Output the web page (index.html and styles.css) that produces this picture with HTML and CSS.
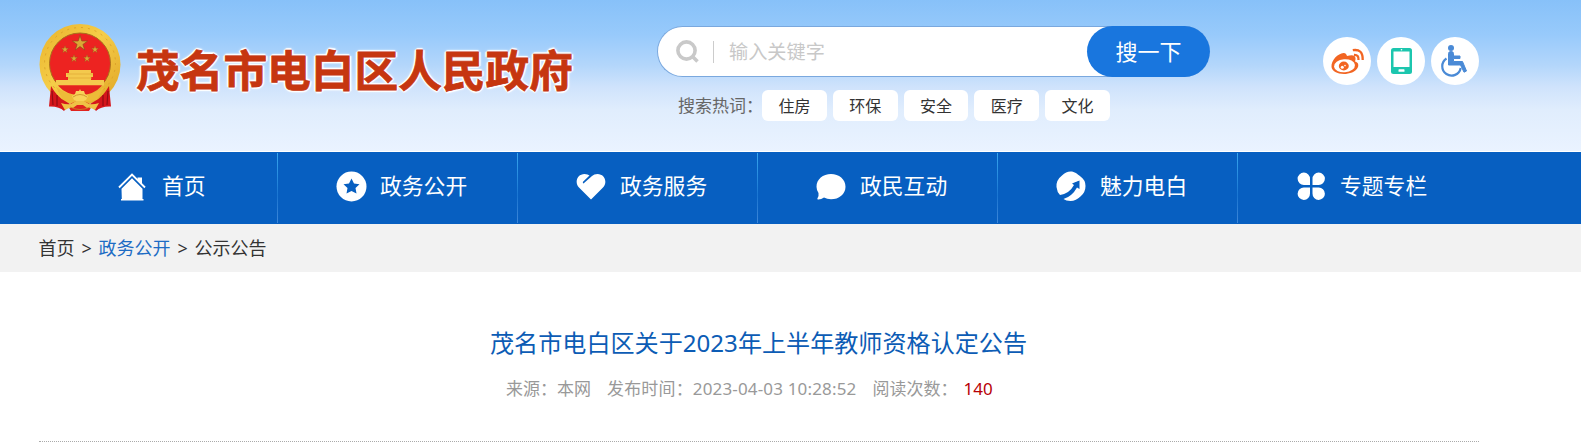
FILE: index.html
```
<!DOCTYPE html>
<html lang="zh-CN">
<head>
<meta charset="utf-8">
<title>茂名市电白区人民政府</title>
<link rel="stylesheet" href="styles.css">
</head>
<body>
<header class="header">
  <div class="brand">
    <svg class="emblem" viewBox="0 0 82 88">
      <defs>
        <linearGradient id="gold" x1="0" y1="0" x2="1" y2="1"><stop offset="0" stop-color="#e9b32c"/><stop offset=".45" stop-color="#f5cd48"/><stop offset="1" stop-color="#e0a424"/></linearGradient>
        <polygon id="star" points="0,-1 .225,-.309 .951,-.309 .363,.118 .588,.809 0,.382 -.588,.809 -.363,.118 -.951,-.309 -.225,-.309"/>
      </defs>
      <circle cx="41" cy="40.500" r="40.500" fill="url(#gold)"/>
      <circle cx="41" cy="39" r="35.500" fill="none" stroke="#dda32a" stroke-width="1" stroke-dasharray="2 5"/>
      <circle cx="41" cy="39.500" r="30.500" fill="#ed2321" stroke="#a8701c" stroke-width="1"/>
      <g fill="#dba836" stroke="#8b481b" stroke-width=".08">
        <use href="#star" transform="translate(41 19.500) scale(8)"/>
        <use href="#star" transform="translate(26 25.500) scale(3.900)"/>
        <use href="#star" transform="translate(56 25.500) scale(3.900)"/>
        <use href="#star" transform="translate(35 34.500) scale(3.900)"/>
        <use href="#star" transform="translate(48 34.500) scale(3.900)"/>
      </g>
      <path d="M30 46h22v3h2v4h-2v3h13v5.500H17V56h12v-3h-2v-4h3z" fill="#f4c94d"/>
      <path d="M28 50h26M29 54h24" stroke="#dfa633" stroke-width=".7"/>
      <path d="M19 61.500h44Q55 71 41 71T19 61.500Z" fill="#e5211f"/>
      <path d="M17 63Q27 70 35 71L39 78 24 76ZM65 63Q55 70 47 71L43 78 58 76Z" fill="#edbb38"/>
      <path d="M12 62Q18 73 26 77L31 80 25 87Q20 82 10 82.500ZM70 62Q64 73 56 77L51 80 57 87Q62 82 72 82.500Z" fill="#d5161b"/>
      <path d="M13 67l1 14M18 71l0 11M69 67l-1 14M64 71l0 11" stroke="#930d13" stroke-width="1.200"/>
      <path d="M29 82q5-5 12-5t12 5l-3 5H32z" fill="#e0231f"/>
      <path d="M33 72l3-2 1-3 3 0 1-2 1 2 3 0 1 3 3 2-2 4q-6 3-12 0z" fill="#f8d359"/>
      <path d="M22 79q6 2 10 1l5-3h8l5 3q4 1 10-1l-4 7q-5-3-8-2l-4-3h-6l-4 3q-3-1-8 2z" fill="#efc345"/>
      <path d="M34 73q7-5 14 0M31 83q10 5 20 0" stroke="#c78a25" fill="none" stroke-width=".8"/>
    </svg>
    <h1 class="site-name">茂名市电白区人民政府</h1>
  </div>
  <div class="search">
    <div class="search-bar">
      <svg class="search-icon" viewBox="0 0 23 23"><circle cx="10.500" cy="10.500" r="8.600" fill="none" stroke="#c9c9c9" stroke-width="3.600"/><path d="M16 16l5.500 5.500" stroke="#c9c9c9" stroke-width="3.600"/></svg>
      <span class="search-sep"></span>
      <span class="placeholder">输入关键字</span>
      <button class="search-btn">搜一下</button>
    </div>
    <div class="hot">
      <span class="hot-label">搜索热词：</span>
      <a class="chip">住房</a><a class="chip">环保</a><a class="chip">安全</a><a class="chip">医疗</a><a class="chip">文化</a>
    </div>
  </div>
  <div class="tools">
    <a class="tool"><svg viewBox="0 0 48 48">
      <path d="M8.500 30C8 23 15 16.500 20.500 16C23 16 23.500 17.500 24 19C28 18 32 17.500 32.500 21C32.700 23 32 24 32 24.500C34.500 25 36 27 35 30C33 35 26 37 21 37C14 37 9 34 8.500 30Z" fill="#f26522"/>
      <ellipse cx="21.500" cy="28.800" rx="10.500" ry="6.500" fill="#fff" transform="rotate(-5 21.500 28.800)"/>
      <ellipse cx="20.800" cy="29" rx="5" ry="4.400" fill="#f26522"/><circle cx="19.300" cy="30.200" r="1.500" fill="#fff"/><circle cx="22" cy="28.600" r=".8" fill="#fff"/>
      <path d="M31 17.800Q36 17.500 35.500 23M29.800 13.200Q40 11.500 39.700 23" fill="none" stroke="#f26522" stroke-width="2.300"/></svg></a>
    <a class="tool"><svg viewBox="0 0 48 48"><rect x="14" y="11" width="21" height="26" rx="2.500" fill="#1cc6ae"/><path d="M16.500 14.500h16V30h-16z" fill="#fff"/><rect x="21.500" y="32.300" width="6" height="2.500" rx=".6" fill="#fff"/><circle cx="24.500" cy="12.800" r=".8" fill="#fff"/></svg></a>
    <a class="tool"><svg viewBox="0 0 48 48"><circle cx="20" cy="11" r="3" fill="#4a8ad6"/><path d="M17.500 16.500q0-2 2.500-2t2.500 2v2.500h6.500v2.500h-6.500v3h9L35.500 34l-2.500 1.200L29.500 28H17.500z" fill="#4a8ad6" stroke="#4a8ad6" stroke-linejoin="round"/><path d="M15.500 21.500A9.300 9.300 0 1 0 29.700 31" fill="none" stroke="#4a8ad6" stroke-width="2.200"/></svg></a>
  </div>
</header>
<nav class="nav">
  <a class="nav-item home"><svg viewBox="0 0 32 32"><path d="M3 17.500L16 4.500L29 17.500" fill="none" stroke="#fff" stroke-width="1.900"/><path d="M21.500 7.500h4.500v7l-4.500-4.500z M5.500 18.700L16 8.200l10.500 10.500V29h1v1.500H5V29h.8z" fill="#fff"/></svg><span>首页</span></a>
  <a class="nav-item"><svg viewBox="0 0 32 32"><circle cx="16.500" cy="16.500" r="15" fill="#fff"/><path d="M16.500 8.500l2.500 5 5.500.7-4 3.900 1 5.500-5-2.700-5 2.700 1-5.500-4-3.900 5.500-.7z" fill="#075fc1"/></svg><span>政务公开</span></a>
  <a class="nav-item"><svg viewBox="0 0 32 32"><path d="M16 29.500L4 17.500C-1 12 2.500 4 9.500 4Q13 4 14.500 5.500L8 11.800Q7.500 13 8.500 13.500L17 6Q19 4 22.500 4C29.500 4 33 12 28 17.500Z" fill="#fff"/></svg><span>政务服务</span></a>
  <a class="nav-item"><svg viewBox="0 0 32 32"><path d="M16 4C24 4 30.500 9.300 30.500 16.700S24 29.300 16 29.300Q12 29.300 9 27.500Q6 29.700 2.800 29.500Q2 29 2.500 28.300Q4 26.500 3.500 23Q1.500 20 1.500 16.700C1.500 9.300 8 4 16 4Z" fill="#fff"/></svg><span>政民互动</span></a>
  <a class="nav-item"><svg viewBox="0 0 32 32"><path d="M15.500 1.500C20 1.500 22 4 25.500 6.500Q30.500 10 30.500 16Q30.500 22 26 26Q21 31 15.500 31Q11 31 8.500 29Q17 26.500 22 17.500L24.500 19V10.500L17 13.500L19 15Q14.500 23.500 5 25Q2 22 1.500 17Q1 10 7 5.500Q11 1.500 15.500 1.500Z" fill="#fff"/><path d="M7.500 27.300Q16 25 21.300 15.500L24 17.500V11.300L18 13.500L20 15Q15.500 24 6 25.700Z" fill="#075fc1"/></svg><span>魅力电白</span></a>
  <a class="nav-item"><svg viewBox="0 0 32 32"><path d="M15 15H9A6.200 6.200 0 1 1 15 9ZM17.500 15V9A6.200 6.200 0 1 1 23.500 15ZM15 17.500V23.500A6.200 6.200 0 1 1 9 17.500ZM17.500 17.500H23.500A6.200 6.200 0 1 1 17.500 23.500Z" fill="#fff"/></svg><span>专题专栏</span></a>
</nav>
<div class="crumbs"><a>首页</a><i>&gt;</i><a class="current">政务公开</a><i>&gt;</i><a>公示公告</a></div>
<main class="article">
  <h2 class="title">茂名市电白区关于2023年上半年教师资格认定公告</h2>
  <div class="meta"><span>来源：本网</span><span class="date">发布时间：2023-04-03 10:28:52</span><span>阅读次数：</span><b>140</b></div>
</main>
</body>
</html>
```
FILE: styles.css
```
* { box-sizing: border-box; }
body {
  margin: 0;
  background: #fff;
  color: #333;
  font-family: "Noto Sans", "Noto Sans CJK SC", sans-serif;
  overflow: hidden;
}
svg { display: block; flex: none; }
.header {
  display: flex;
  align-items: flex-start;
  height: 152px;
  padding-left: 39px;
  border-bottom: 1px solid #fff;
  background: linear-gradient(#87c1f9 0, #98cafb 35px, #b3d6fb 65px, #cfe3fc 87px, #e0edfd 110px, #eaf3ff 151px);
}
.brand { display: flex; width: 618px; padding-top: 24px; }
.emblem { width: 82px; height: 88px; }
.site-name {
  margin: 12px 0 0 15px;
  font: 700 43.7px/64px "Noto Sans CJK SC", sans-serif;
  white-space: nowrap;
  color: #c63610;
  -webkit-text-stroke: .8px #c63610;
  text-shadow: 2px 0 1px #fff, -2px 0 1px #fff, 0 2px 1px #fff, 0 -2px 1px #fff, 1px 1px 1px #fff, -1px -1px 1px #fff, 0 0 4px #fff;
}
.search { width: 666px; padding-top: 26px; }
.search-bar {
  display: flex;
  align-items: center;
  width: 553px;
  height: 51px;
  padding-left: 18px;
  border: 1px solid #7aa8de;
  border-right: 0;
  border-radius: 26px;
  background: #fff;
}
.search-icon { width: 23px; height: 23px; }
.search-sep { width: 1px; height: 22px; margin-left: 14px; background: #ccc; }
.placeholder { margin-left: 15px; font-size: 19.2px; line-height: 28px; color: #c8c8c8; }
.search-btn {
  width: 123px;
  height: 51px;
  margin: 0 0 0 auto;
  padding: 0 0 3px;
  border: 0;
  border-radius: 26px;
  background: #1976de;
  color: #fff;
  font: 22px "Noto Sans CJK SC", sans-serif;
}
.hot { display: flex; gap: 6px; margin: 13px 0 0 20px; line-height: 32px; }
.hot-label { width: 79px; padding-left: 1px; font-size: 17px; white-space: nowrap; color: #666; }
.chip { width: 64.8px; height: 31px; border-radius: 6px; background: #fff; text-align: center; font-size: 16px; }
.tools { display: flex; gap: 6px; padding-top: 37px; }
.tool { width: 48px; height: 48px; border-radius: 50%; background: #fff; }
.nav { display: flex; height: 72px; padding-left: 38px; background: #075fc1; }
.nav-item {
  display: flex;
  align-items: center;
  width: 240px;
  gap: 13px;
  padding: 0 0 5px 57px;
  background: linear-gradient(#37a6ee, #1a76d2 60%, #3e87d9) right 1px / 1px 70px no-repeat;
  color: #fff;
  font-size: 21.8px;
  white-space: nowrap;
}
.nav-item span { padding-bottom: 2px; }
.nav-item.home { padding-left: 78px; gap: 14px; }
.nav-item:last-child { background: none; }
.nav-item svg { width: 32px; height: 32px; }
.crumbs {
  display: flex;
  height: 48px;
  padding-left: 38.6px;
  background: #f2f2f2;
  font-size: 18px;
  line-height: 48px;
}
.crumbs i { width: 24px; text-align: center; font-style: normal; }
.crumbs .current { color: #1d6cc4; }
.article {
  height: 170px;
  margin: 0 102px 0 39px;
  padding-top: 52px;
  border-bottom: 1px dotted #aaa;
}
.title { margin: 0 0 0 451px; font-size: 24.1px; line-height: 38px; font-weight: 400; color: #0c5cb5; white-space: nowrap; }
.meta { display: flex; margin: 12px 0 0 467px; font-size: 17px; line-height: 30px; color: #999; white-space: nowrap; }
.meta span { margin-right: 16px; }
.meta .date { letter-spacing: .16px; }
.meta b { margin-left: -10px; font-weight: 400; color: #b80006; }
```
